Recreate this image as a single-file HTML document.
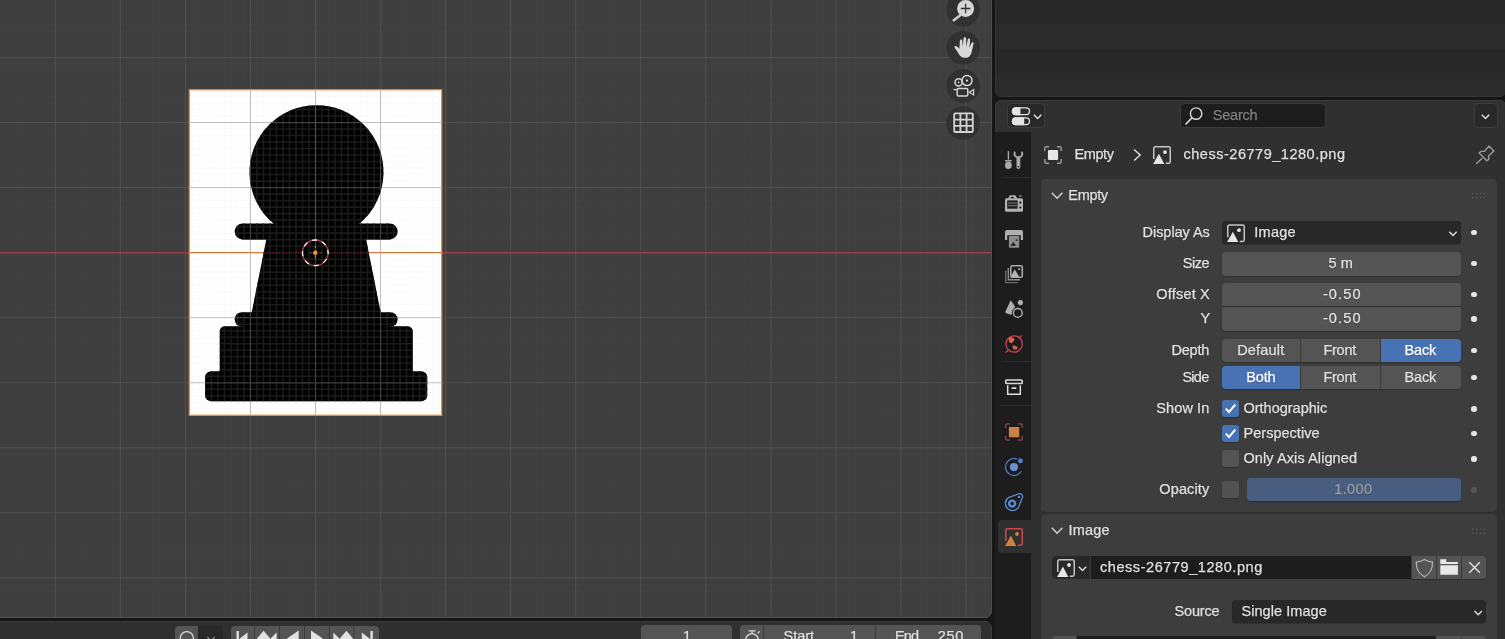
<!DOCTYPE html>
<html><head><meta charset="utf-8"><title>Blender</title>
<style>
html,body{margin:0;padding:0;}
body{width:1505px;height:639px;overflow:hidden;background:#161616;position:relative;font-family:"Liberation Sans",sans-serif;}
.a{position:absolute;box-sizing:border-box;}
.vp{position:absolute;left:0;top:0;display:block;}
.t{position:absolute;height:20px;line-height:20px;white-space:pre;text-shadow:0 1px 1px rgba(0,0,0,0.35);-webkit-text-stroke:0.25px currentColor;}
svg{overflow:visible}
.num{background:#545454;border-radius:3.5px;box-shadow:0 1px 1px rgba(0,0,0,0.22);}
.menu{background:#282828;border-radius:3.5px;box-shadow:0 1px 1px rgba(0,0,0,0.22);}
.dot{width:5.4px;height:5.4px;border-radius:50%;background:#e6e6e6;left:1471.3px;}
.cb{left:1222px;width:17px;height:17px;border-radius:3px;background:#545454;box-shadow:0 1px 1px rgba(0,0,0,0.22);}
.cb.on{background:#4772b3;}
.panel{background:#3d3d3d;border-radius:5px;left:1041px;width:456px;}
</style></head><body>
<div class="a" style="left:0;top:0;width:991.500px;height:617.700px;border-radius:0 0 7px 0;overflow:hidden;"><svg class="vp" width="992" height="618" viewBox="0 0 992 618">
<defs>
<path id="gmn" d="M3.26 0V618M9.76 0V618M16.27 0V618M22.77 0V618M29.28 0V618M35.79 0V618M42.29 0V618M48.80 0V618M61.81 0V618M68.31 0V618M74.81 0V618M81.32 0V618M87.83 0V618M94.33 0V618M100.84 0V618M107.34 0V618M113.84 0V618M126.85 0V618M133.36 0V618M139.87 0V618M146.37 0V618M152.88 0V618M159.38 0V618M165.88 0V618M172.39 0V618M178.90 0V618M191.91 0V618M198.41 0V618M204.92 0V618M211.42 0V618M217.93 0V618M224.43 0V618M230.94 0V618M237.44 0V618M243.94 0V618M256.95 0V618M263.46 0V618M269.97 0V618M276.47 0V618M282.98 0V618M289.48 0V618M295.99 0V618M302.49 0V618M309.00 0V618M322.00 0V618M328.51 0V618M335.01 0V618M341.52 0V618M348.02 0V618M354.53 0V618M361.03 0V618M367.54 0V618M374.05 0V618M387.06 0V618M393.56 0V618M400.06 0V618M406.57 0V618M413.07 0V618M419.58 0V618M426.08 0V618M432.59 0V618M439.10 0V618M452.11 0V618M458.61 0V618M465.12 0V618M471.62 0V618M478.12 0V618M484.63 0V618M491.13 0V618M497.64 0V618M504.14 0V618M517.15 0V618M523.66 0V618M530.16 0V618M536.67 0V618M543.17 0V618M549.68 0V618M556.18 0V618M562.69 0V618M569.19 0V618M582.20 0V618M588.71 0V618M595.21 0V618M601.72 0V618M608.23 0V618M614.73 0V618M621.24 0V618M627.74 0V618M634.25 0V618M647.25 0V618M653.76 0V618M660.26 0V618M666.77 0V618M673.27 0V618M679.78 0V618M686.28 0V618M692.79 0V618M699.30 0V618M712.31 0V618M718.81 0V618M725.32 0V618M731.82 0V618M738.33 0V618M744.83 0V618M751.34 0V618M757.84 0V618M764.35 0V618M777.36 0V618M783.86 0V618M790.37 0V618M796.87 0V618M803.38 0V618M809.88 0V618M816.38 0V618M822.89 0V618M829.39 0V618M842.40 0V618M848.91 0V618M855.41 0V618M861.92 0V618M868.42 0V618M874.93 0V618M881.43 0V618M887.94 0V618M894.44 0V618M907.46 0V618M913.96 0V618M920.47 0V618M926.97 0V618M933.48 0V618M939.98 0V618M946.49 0V618M952.99 0V618M959.50 0V618M972.50 0V618M979.01 0V618M985.51 0V618M0 5.46H992M0 11.97H992M0 18.47H992M0 24.98H992M0 31.48H992M0 37.99H992M0 44.49H992M0 51.00H992M0 64.00H992M0 70.51H992M0 77.02H992M0 83.52H992M0 90.03H992M0 96.53H992M0 103.03H992M0 109.54H992M0 116.05H992M0 129.06H992M0 135.56H992M0 142.06H992M0 148.57H992M0 155.07H992M0 161.58H992M0 168.09H992M0 174.59H992M0 181.10H992M0 194.11H992M0 200.61H992M0 207.12H992M0 213.62H992M0 220.12H992M0 226.63H992M0 233.13H992M0 239.64H992M0 246.15H992M0 259.16H992M0 265.66H992M0 272.17H992M0 278.67H992M0 285.18H992M0 291.68H992M0 298.19H992M0 304.69H992M0 311.19H992M0 324.20H992M0 330.71H992M0 337.22H992M0 343.72H992M0 350.23H992M0 356.73H992M0 363.24H992M0 369.74H992M0 376.25H992M0 389.25H992M0 395.76H992M0 402.26H992M0 408.77H992M0 415.27H992M0 421.78H992M0 428.28H992M0 434.79H992M0 441.30H992M0 454.31H992M0 460.81H992M0 467.31H992M0 473.82H992M0 480.32H992M0 486.83H992M0 493.34H992M0 499.84H992M0 506.35H992M0 519.36H992M0 525.86H992M0 532.37H992M0 538.87H992M0 545.38H992M0 551.88H992M0 558.38H992M0 564.89H992M0 571.39H992M0 584.40H992M0 590.91H992M0 597.41H992M0 603.92H992M0 610.42H992M0 616.93H992"/>
<path id="gmj" d="M55.30 0V618M120.35 0V618M185.40 0V618M250.45 0V618M315.50 0V618M380.55 0V618M445.60 0V618M510.65 0V618M575.70 0V618M640.75 0V618M705.80 0V618M770.85 0V618M835.90 0V618M900.95 0V618M966.00 0V618M0 57.50H992M0 122.55H992M0 187.60H992M0 317.70H992M0 382.75H992M0 447.80H992M0 512.85H992M0 577.90H992"/>
<clipPath id="cimg"><rect x="189.45" y="90" width="252.1" height="325.2"/></clipPath>
<g id="pawnshape">
<circle cx="316.5" cy="172.2" r="67"/>
<rect x="234.7" y="223.6" width="162.9" height="15.8" rx="7.9"/>
<path d="M268 231L364.4 231L382 319L250.4 319Z"/>
<rect x="234.7" y="312.2" width="162.9" height="14.4" rx="7.2"/>
<rect x="242" y="318" width="148.300" height="12"/>
<rect x="219.7" y="326.3" width="193" height="52" rx="5"/>
<rect x="205.1" y="371.3" width="222.2" height="30" rx="6"/>
</g>
<clipPath id="cpawn">
<circle cx="316.5" cy="172.2" r="67"/>
<rect x="234.7" y="223.6" width="162.9" height="15.8" rx="7.9"/>
<path d="M268 231L364.4 231L382 319L250.4 319Z"/>
<rect x="234.7" y="312.2" width="162.9" height="14.4" rx="7.2"/>
<rect x="242" y="318" width="148.300" height="12"/>
<rect x="219.7" y="326.3" width="193" height="52" rx="5"/>
<rect x="205.1" y="371.3" width="222.2" height="30" rx="6"/>
</clipPath>
</defs>
<rect x="0" y="0" width="992" height="618" fill="#3f3f3f"/>
<g fill="none" stroke-width="1">
<use href="#gmn" stroke="#424242"/>
<use href="#gmj" stroke="#525252"/>
</g>
<!-- x axis -->
<path d="M0 252.750H992" stroke="#9a3c4b" stroke-width="1.600" fill="none"/>
<!-- image -->
<rect x="189.45" y="90" width="252.1" height="325.2" fill="#ffffff"/>
<g fill="none" stroke-width="1" clip-path="url(#cimg)">
<use href="#gmn" stroke="#f9f9f9"/>
<use href="#gmj" stroke="#bdbdbd"/>
<path d="M189 252.700H442" stroke="#cf7a3c" stroke-width="1.200"/>
</g>
<use href="#pawnshape" fill="#000000"/>
<g fill="none" stroke-width="1" clip-path="url(#cpawn)">
<use href="#gmn" stroke="#1b1b1b" stroke-width="1.550"/>
<use href="#gmj" stroke="#404040" stroke-width="1.250"/>
<path d="M315.500 104V240" stroke="#4e4e4e" stroke-width="1"/>
<path d="M250 252.800H302M329 252.800H382" stroke="#8a3443" stroke-width="1.2" stroke-dasharray="1.2 1.2"/>
</g>
<!-- selection outline -->
<rect x="189.3" y="89.700" width="252.400" height="325.600" fill="none" stroke="#f08a2c" stroke-width="1.300"/>
<!-- 3d cursor -->
<g fill="none" stroke-width="1.3">
<circle cx="315.3" cy="252.8" r="12.8" stroke="#a63a4b"/>
<circle cx="315.3" cy="252.8" r="12.8" stroke="#f0f0f0" stroke-dasharray="5.027 5.027" stroke-dashoffset="3.6"/>
<path d="M309.300 252.800H312.400M319.400 252.800H321.800" stroke="#a63a4b" stroke-width="1"/>
<path d="M315.400 246.300V248M315.400 255.400V258.200" stroke="#9a9a9a" stroke-width="1"/>
</g>
<circle cx="315.300" cy="252.800" r="2.300" fill="#f09a2a"/>
<!-- nav gizmo buttons -->
<g fill="#303030" fill-opacity="0.9">
<circle cx="963.1" cy="9.9" r="16.9"/>
<circle cx="963.1" cy="47.9" r="16.9"/>
<circle cx="963.1" cy="85.9" r="16.9"/>
<circle cx="963.1" cy="123" r="16.9"/>
</g>
<!-- zoom icon -->
<path d="M960 15.400L953.800 20.300" stroke="#cdcdcd" stroke-width="2.600" stroke-linecap="round" fill="none"/>
<circle cx="965.600" cy="8.500" r="8.500" fill="#d6d6d6"/>
<path d="M960.800 8.500H970.400M965.600 3.700V13.300" stroke="#333333" stroke-width="1.300" fill="none"/>
<!-- hand icon -->
<g fill="#d8d8d8" transform="translate(1.2 0)">
<path d="M955.5 50.5c-1.2-1.6-2.8-3.2-2-4.2 1-1.1 3 .4 4.6 2.6l.6-8.2c.1-1.6 2.3-1.6 2.4 0l.5 6.2.7-8.4c.2-1.6 2.5-1.6 2.6 0l.2 8.4 1.4-7.4c.3-1.5 2.5-1.2 2.4.4l-.7 8 2-5c.6-1.4 2.5-.7 2.2.7l-1.800 7.800c-.8 3.600-2.300 6.400-6.700 6.400-4.500 0-6.200-3.200-8.400-7.300z"/>
</g>
<!-- camera icon -->
<g fill="none" stroke="#d4d4d4" stroke-width="1.5">
<circle cx="958.6" cy="82.3" r="3.6"/>
<circle cx="967" cy="80.6" r="5"/>
<rect x="957.2" y="88.6" width="10.6" height="7.4" rx="1.2"/>
<path d="M969.4 92.3L973.6 89.6V95Z" stroke-width="1.2"/>
<path d="M953.6 89.6H956.6" stroke-width="1.4"/>
</g>
<circle cx="958.6" cy="82.3" r="0.9" fill="#e4e4e4"/><circle cx="967" cy="80.6" r="1.1" fill="#e4e4e4"/>
<!-- grid icon -->
<g fill="none" stroke="#d4d4d4" stroke-width="1.8">
<rect x="954.2" y="113.400" width="18.6" height="18.6" rx="1"/>
<path d="M960.4 113.400V132M966.600 113.400V132M954.2 119.600H972.800M954.200 125.800H972.800"/>
</g>
</svg>
</div>
<div class="a" style="left:-2px;top:-2px;width:993.500px;height:619.700px;border-radius:0 0 7px 0;border:1.200px solid #4e4e4e;"></div>

<!-- timeline header -->
<div class="a" style="left:-2px;top:621.200px;width:993.700px;height:24px;background:#303030;border-radius:0 7px 0 0;border:1px solid #3d3d3d;"></div>
<div class="a" style="left:175px;top:625.5px;width:23.3px;height:20px;background:#545454;border-radius:4px 0 0 0;"></div>
<div class="a" style="left:198.3px;top:625.5px;width:24.7px;height:20px;background:#282828;border-radius:0 4px 0 0;"></div>
<div class="a" style="left:231.3px;top:625.5px;width:147.7px;height:20px;background:#545454;border-radius:4px 4px 0 0;"></div>
<div class="a" style="left:640.7px;top:625.3px;width:91.7px;height:20px;background:#545454;border-radius:4px 4px 0 0;"></div>
<div class="a" style="left:740px;top:625.3px;width:241px;height:20px;background:#545454;border-radius:4px 4px 0 0;"></div>
<svg class="a" style="left:0;top:621px" width="992" height="18" viewBox="0 621 992 18">
<g stroke="#3a3a3a" stroke-width="1" fill="none"><path d="M254.6 625.5V639M279.6 625.5V639M304.6 625.5V639M329.4 625.5V639M354 625.5V639M763.700 625.3V639M875.400 625.3V639"/></g>
<circle cx="186.8" cy="638.2" r="6.6" fill="none" stroke="#dcdcdc" stroke-width="1.3"/>
<path d="M207.200 636.800L211 640.600L214.800 636.800" fill="none" stroke="#8a8a8a" stroke-width="1.2"/>
<g fill="#e2e2e2">
<rect x="236.500" y="631" width="2.400" height="10"/><path d="M247.500 632.500V645L239.500 638.800Z"/>
<path d="M263.600 630.800L270.200 638.500L263.600 646L257 638.500Z"/><path d="M276.700 632.500V645L270.300 638.800Z"/>
<path d="M298.700 630.400V646.600L287 638.500Z"/>
<path d="M311 630.400V646.600L322.700 638.500Z"/>
<path d="M333.300 632.500V645L339.700 638.800Z"/><path d="M346.400 630.800L353 638.500L346.400 646L339.800 638.500Z"/>
<path d="M361.800 632.500V645L369.800 638.800Z"/><rect x="370.400" y="631" width="2.400" height="10"/>
</g>
<g fill="none" stroke="#dcdcdc" stroke-width="1.3"><circle cx="752" cy="640" r="6.300"/><path d="M748.500 630.800H755.500M752 631V634M757.800 633.200L759.600 631.400"/></g>
</svg>

<!-- outliner -->
<div class="a" style="left:995px;top:-4px;width:510.500px;height:101px;background:#282828;border-radius:6px;border:1px solid #353535;overflow:hidden;">
<div class="a" style="left:0;top:27px;width:512px;height:25px;background:#2b2b2b;"></div>
<div class="a" style="left:0;top:77px;width:512px;height:25px;background:#2b2b2b;"></div>
</div>

<!-- properties editor -->
<div class="a" style="left:995px;top:100px;width:510.500px;height:545px;background:#303030;border-radius:6px;border:1px solid #3a3a3a;"></div>
<div class="a" style="left:995px;top:131.700px;width:36px;height:510px;background:#1d1d1d;"></div>
<div class="a" style="left:998px;top:520px;width:33px;height:33px;background:#303030;border-radius:4px 0 0 4px;"></div>
<div class="a" style="left:1001px;top:177px;width:30px;height:1px;background:#2c2c2c;"></div>
<div class="a" style="left:1001px;top:361px;width:30px;height:1px;background:#2c2c2c;"></div>
<div class="a" style="left:1001px;top:404.500px;width:30px;height:1px;background:#2c2c2c;"></div>

<!-- header widgets -->
<div class="a" style="left:1006.500px;top:103.200px;width:38.800px;height:24.700px;background:#282828;border:1px solid #3d3d3d;border-radius:4.500px;"></div>
<div class="a" style="left:1179.800px;top:103.200px;width:146.500px;height:24.600px;background:#1d1d1d;border:1px solid #3a3a3a;border-radius:4.500px;"></div>
<div class="a" style="left:1473.500px;top:103.200px;width:24px;height:24.600px;background:#282828;border:1px solid #3d3d3d;border-radius:4.500px;"></div>

<!-- panels -->
<div class="a panel" style="top:179px;height:332.500px;"></div>
<div class="a panel" style="top:514px;height:140px;"></div>

<!-- Empty panel widgets -->
<div class="a menu" style="left:1222px;top:221px;width:239px;height:23px;"></div>
<div class="a num" style="left:1222px;top:252px;width:239px;height:23.500px;"></div>
<div class="a num" style="left:1222px;top:283px;width:239px;height:23.300px;border-radius:4px 4px 0 0;"></div>
<div class="a num" style="left:1222px;top:307.300px;width:239px;height:23.700px;border-radius:0 0 4px 4px;"></div>
<!-- depth -->
<div class="a num" style="left:1222px;top:339px;width:78px;height:23px;border-radius:4px 0 0 4px;"></div>
<div class="a num" style="left:1301px;top:339px;width:79.200px;height:23px;border-radius:0;"></div>
<div class="a num" style="left:1381.200px;top:339px;width:79.800px;height:23px;border-radius:0 4px 4px 0;background:#4772b3;"></div>
<!-- side -->
<div class="a num" style="left:1222px;top:366px;width:78px;height:23px;border-radius:4px 0 0 4px;background:#4772b3;"></div>
<div class="a num" style="left:1301px;top:366px;width:79.200px;height:23px;border-radius:0;"></div>
<div class="a num" style="left:1381.200px;top:366px;width:79.800px;height:23px;border-radius:0 4px 4px 0;"></div>
<!-- checkboxes -->
<div class="a cb on" style="top:400px;"></div>
<div class="a cb on" style="top:425px;"></div>
<div class="a cb" style="top:450px;"></div>
<div class="a cb" style="top:481.200px;background:#525252;"></div>
<svg class="a" style="left:1222px;top:400px" width="17" height="17" viewBox="0 0 17 17"><path d="M3.800 8.600L7 12L13.300 4.600" fill="none" stroke="#ffffff" stroke-width="2"/></svg>
<svg class="a" style="left:1222px;top:425px" width="17" height="17" viewBox="0 0 17 17"><path d="M3.800 8.600L7 12L13.300 4.600" fill="none" stroke="#ffffff" stroke-width="2"/></svg>
<!-- opacity slider -->
<div class="a" style="left:1247px;top:478px;width:214.300px;height:23px;border-radius:3.500px;background:#495d81;box-shadow:0 1px 1px rgba(0,0,0,0.22);"></div>
<!-- dots -->
<div class="a dot" style="top:229.600px"></div>
<div class="a dot" style="top:260.600px"></div>
<div class="a dot" style="top:291.600px"></div>
<div class="a dot" style="top:316.400px"></div>
<div class="a dot" style="top:348.100px"></div>
<div class="a dot" style="top:374.800px"></div>
<div class="a dot" style="top:406.300px"></div>
<div class="a dot" style="top:430.900px"></div>
<div class="a dot" style="top:456.300px"></div>
<div class="a dot" style="top:487.300px;background:#575757"></div>

<!-- Image panel widgets -->
<div class="a" style="left:1052px;top:556px;width:38.300px;height:23px;background:#282828;border-radius:4px 0 0 4px;"></div>
<div class="a" style="left:1091px;top:556px;width:320px;height:23px;background:#1d1d1d;"></div>
<div class="a num" style="left:1412px;top:556px;width:24.300px;height:23px;border-radius:0;"></div>
<div class="a num" style="left:1437.200px;top:556px;width:23.800px;height:23px;border-radius:0;"></div>
<div class="a num" style="left:1461.800px;top:556px;width:24.300px;height:23px;border-radius:0 4px 4px 0;"></div>
<div class="a menu" style="left:1232px;top:600.300px;width:254px;height:22.700px;"></div>
<div class="a num" style="left:1052px;top:636.300px;width:24.300px;height:10px;border-radius:4px 0 0 0;"></div>
<div class="a" style="left:1077px;top:636.300px;width:358.600px;height:10px;background:#1d1d1d;"></div>
<div class="a num" style="left:1436.400px;top:636.300px;width:24.300px;height:10px;border-radius:0;"></div>
<div class="a num" style="left:1461.800px;top:636.300px;width:24.300px;height:10px;border-radius:0 4px 0 0;"></div>

<svg class="a" style="left:0;top:0" width="1505" height="639" viewBox="0 0 1505 639">
<defs>
<g id="imgico">
<path d="M0.750 13V2.400a1.650 1.650 0 0 1 1.650-1.650H15.600a1.650 1.650 0 0 1 1.650 1.650V15.600a1.650 1.650 0 0 1-1.650 1.650H12.800" fill="none" stroke-width="1.500"/>
<path d="M0.100 17.900L5.900 7.600L11.300 17.900Z" stroke="none"/>
<circle cx="12" cy="6" r="1.900" stroke="none"/>
</g>
<path id="chev" d="M-3.700 -1.900L0 1.900L3.700 -1.900" fill="none" stroke-width="1.400"/>
</defs>

<!-- editor type icon -->
<g>
<rect x="1012.700" y="107.800" width="16.800" height="6.800" rx="3.400" fill="#2b2b2b" stroke="#e0e0e0" stroke-width="1.300"/>
<path d="M1015.800 107.200H1020.400V115.200H1015.800a4 4 0 0 1 0-8Z" fill="#e4e4e4"/>
<rect x="1012.700" y="117.800" width="16.800" height="6.800" rx="3.400" fill="#2b2b2b" stroke="#e0e0e0" stroke-width="1.300"/>
<path d="M1015.800 117.200H1024.200V125.200H1015.800a4 4 0 0 1 0-8Z" fill="#e4e4e4"/>
<use href="#chev" x="1037.600" y="116.600" stroke="#e0e0e0"/>
</g>
<!-- search icon -->
<g fill="none" stroke="#d8d8d8" stroke-width="1.400"><circle cx="1196.100" cy="113.600" r="5.700"/><path d="M1192 117.800L1185.600 124.400" stroke-width="1.600"/></g>
<!-- header right chevron -->
<use href="#chev" x="1485.500" y="116.600" stroke="#e0e0e0"/>

<!-- breadcrumb icons -->
<rect x="1047.900" y="149.900" width="10.200" height="10.200" rx="1" fill="#e6e6e6"/>
<g fill="none" stroke="#9a9a9a" stroke-width="1.400"><path d="M1044.800 151V148.300a1.500 1.500 0 0 1 1.500-1.500H1049M1057 146.800H1059.700a1.500 1.500 0 0 1 1.500 1.500V151M1061.200 159V161.700a1.500 1.500 0 0 1-1.500 1.500H1057M1049 163.200H1046.300a1.500 1.500 0 0 1-1.500-1.500V159"/></g>
<path d="M1134.100 149.500L1140.200 155L1134.100 160.500" fill="none" stroke="#e0e0e0" stroke-width="1.400"/>
<use href="#imgico" x="1153" y="146.100" fill="#e6e6e6" stroke="#c6c6c6"/>
<!-- pin -->
<g fill="none" stroke="#9c9c9c" stroke-width="1.400" stroke-linejoin="round" stroke-linecap="round"><path d="M1476.500 163.500L1481.900 158.500"/><path d="M1479.200 153.100L1486.900 160.800L1488.800 159.300L1488.500 155.900L1493.900 151.100L1488.900 146.100L1484.400 151.300L1480.900 151.400Z"/></g>

<!-- panel chevrons & grips -->
<path d="M1051.800 192.800L1057.100 198.300L1062.400 192.800" fill="none" stroke="#d4d4d4" stroke-width="1.400"/>
<path d="M1051.800 527.800L1057.100 533.300L1062.400 527.800" fill="none" stroke="#d4d4d4" stroke-width="1.400"/>
<g fill="#5c5c5c">
<rect x="1472" y="192.900" width="1.400" height="1.400"/><rect x="1475.900" y="192.900" width="1.400" height="1.400"/><rect x="1479.800" y="192.900" width="1.400" height="1.400"/><rect x="1483.700" y="192.900" width="1.400" height="1.400"/>
<rect x="1472" y="196.800" width="1.400" height="1.400"/><rect x="1475.900" y="196.800" width="1.400" height="1.400"/><rect x="1479.800" y="196.800" width="1.400" height="1.400"/><rect x="1483.700" y="196.800" width="1.400" height="1.400"/>
<rect x="1472" y="528.600" width="1.400" height="1.400"/><rect x="1475.900" y="528.600" width="1.400" height="1.400"/><rect x="1479.800" y="528.600" width="1.400" height="1.400"/><rect x="1483.700" y="528.600" width="1.400" height="1.400"/>
<rect x="1472" y="532.500" width="1.400" height="1.400"/><rect x="1475.900" y="532.500" width="1.400" height="1.400"/><rect x="1479.800" y="532.500" width="1.400" height="1.400"/><rect x="1483.700" y="532.500" width="1.400" height="1.400"/>
</g>

<!-- Display As dropdown -->
<use href="#imgico" x="1227" y="224.200" fill="#e6e6e6" stroke="#c6c6c6"/>
<use href="#chev" x="1453" y="233.600" stroke="#e0e0e0"/>

<!-- ID widget -->
<use href="#imgico" x="1057" y="559" fill="#e6e6e6" stroke="#c6c6c6"/>
<use href="#chev" x="1082.500" y="568.600" stroke="#e0e0e0"/>
<path d="M1424.400 559.600C1421.500 561.600 1419 562 1416.300 562.100C1416 569 1418.500 573.500 1424.400 576.800C1430.300 573.500 1432.800 569 1432.500 562.100C1429.800 562 1427.300 561.600 1424.400 559.600Z" fill="none" stroke="#b4b4b4" stroke-width="1.200"/>
<path d="M1440.300 559.300H1446.300V562H1457.900V564.100H1440.300ZM1440.300 565.300H1457.900V574.800H1440.300Z" fill="#e8e8e8"/>
<path d="M1469.300 562.300L1479.800 572.700M1479.800 562.300L1469.300 572.700" stroke="#e6e6e6" stroke-width="1.300" fill="none"/>
<!-- Source dropdown chevron -->
<use href="#chev" x="1478.200" y="612.800" stroke="#e0e0e0"/>

<!-- NAV TAB ICONS -->
<!-- tool -->
<g fill="#a8a8a8">
<rect x="1007.700" y="151.200" width="1.400" height="8.400"/><rect x="1005" y="160" width="6.800" height="1.500" rx="0.300"/><ellipse cx="1008.400" cy="165.300" rx="3.400" ry="3.800"/>
<path d="M1014.300 151.300a4.500 4.500 0 0 0 2.200 6.700V167a1.900 1.900 0 0 0 3.800 0V158a4.500 4.500 0 0 0 2.200-6.700l-1.300 0.600V155.200l-1.500 1.100h-2.600l-1.500-1.100V151.900Z"/>
</g>
<circle cx="1018.400" cy="166.700" r="0.700" fill="#1d1d1d"/>
<!-- render -->
<g fill="#b2b2b2">
<rect x="1005" y="198.300" width="18" height="13.500" rx="1.500"/>
<path d="M1008 198.500L1009.900 195.300H1015.400L1017.300 198.500Z"/>
<rect x="1019.200" y="195.400" width="2.200" height="1.200"/>
</g>
<rect x="1007.200" y="200.400" width="10.400" height="8.300" fill="#1d1d1d"/>
<path d="M1008 203H1016.800M1008 205.700H1016.800" stroke="#8a8a8a" stroke-width="0.900"/>
<g fill="#1d1d1d"><ellipse cx="1012.200" cy="197.600" rx="1.700" ry="0.800"/><circle cx="1020.300" cy="202.700" r="1.100"/><circle cx="1020.300" cy="207.600" r="1.100"/></g>
<!-- output -->
<path d="M1007 230H1021a2 2 0 0 1 2 2V239.900H1020.800V235.200H1007.200V239.900H1005V232a2 2 0 0 1 2-2Z" fill="#b0b0b0"/>
<rect x="1008.900" y="236.100" width="10.300" height="11.700" rx="0.800" fill="#8c8c8c"/>
<path d="M1010.400 245.700L1013.300 242L1016.200 245.700Z" fill="#1d1d1d"/><circle cx="1016.500" cy="240.200" r="0.900" fill="#1d1d1d"/>
<!-- view layer -->
<g fill="none">
<path d="M1005.700 270.500V282.600H1017.600" stroke="#6a6a6a" stroke-width="1.400"/>
<path d="M1008.300 268V279.800H1020" stroke="#8c8c8c" stroke-width="1.400"/>
<rect x="1010.800" y="265.800" width="11.500" height="11.500" rx="1.500" stroke="#a8a8a8" stroke-width="1.600" fill="#1d1d1d"/>
</g>
<path d="M1010.600 277.300L1014.600 269.300L1019.600 277.300Z" fill="#b4b4b4"/><rect x="1018.300" y="268.200" width="1.800" height="1.800" fill="#b4b4b4"/>
<!-- scene -->
<path d="M1010.700 300.200L1005.200 312L1005.800 313L1011.400 315L1012.300 310.500L1015.200 306.800Z" fill="#b0b0b0"/>
<circle cx="1017.800" cy="312.900" r="4.400" fill="#1d1d1d" stroke="#b0b0b0" stroke-width="1.400"/>
<circle cx="1020.400" cy="302.600" r="2.600" fill="#b0b0b0"/>
<!-- world -->
<g fill="none" stroke="#c84453" stroke-width="1.300"><circle cx="1014.100" cy="344" r="8.200"/><path d="M1019.600 337.700L1021.800 335.400M1008.400 350.300L1005.600 352.600"/></g>
<path d="M1008.500 338.500L1011 336.800L1014.800 339.200L1013.400 341.600L1011.400 343.500L1009 341.800Z" fill="#dc6448"/>
<path d="M1012.200 345.300L1015.800 346L1017.900 347.500L1016.400 349.600L1013.400 349.600Z" fill="#dc6448"/>
<!-- collection -->
<g fill="none" stroke="#dcdcdc" stroke-width="1.500"><rect x="1005.750" y="379.900" width="16.500" height="3.600" rx="0.800"/><path d="M1007.700 385.200V394.200H1020.300V385.200"/></g>
<rect x="1011.500" y="387.200" width="5" height="1.700" rx="0.700" fill="#dcdcdc"/>
<!-- object -->
<rect x="1008.900" y="426.900" width="10.300" height="10.300" rx="0.600" fill="#c98348"/>
<g fill="none" stroke="#8c4a56" stroke-width="1.300"><path d="M1005.700 428V425.300a1.500 1.500 0 0 1 1.500-1.500H1010M1018 423.800H1020.700a1.500 1.500 0 0 1 1.500 1.500V428M1022.200 436V438.700a1.500 1.500 0 0 1-1.500 1.500H1018M1010 440.200H1007.200a1.500 1.500 0 0 1-1.500-1.500V436"/></g>
<!-- physics -->
<circle cx="1014" cy="467" r="4.100" fill="#6a8fd2"/>
<path d="M1017.200 459.100A8.500 8.500 0 1 0 1021.400 471.200" fill="none" stroke="#4f78bd" stroke-width="1.300"/>
<circle cx="1020.400" cy="460.700" r="2.500" fill="#4f7cc4"/>
<!-- constraints -->
<g fill="none" stroke="#5b8ad8">
<path d="M1019.300 493.600C1021.600 493.300 1023 495.200 1022.400 497.300L1018.900 506.400A7.100 7.100 0 1 1 1008.400 497.600Z" stroke-width="1.300"/>
<circle cx="1012.100" cy="503.600" r="3" stroke-width="2.400"/>
</g>
<rect x="1018" y="496" width="2" height="2" fill="#5b8ad8"/>
<!-- data (image) -->
<use href="#imgico" x="1005" y="528" fill="#cf8240" stroke="#c84a4c"/>
</svg>

<div class="a" id="txt" style="left:0;top:0;width:1505px;height:639px;will-change:transform;">
<div class="t" style="left:1212.80px;top:104.88px;font-size:14.5px;letter-spacing:-0.211px;color:#808080;">Search</div>
<div class="t" style="left:1074.50px;top:144.48px;font-size:14.5px;letter-spacing:-0.398px;color:#e0e0e0;">Empty</div>
<div class="t" style="left:1183.50px;top:144.48px;font-size:14.5px;letter-spacing:0.522px;color:#e0e0e0;">chess-26779_1280.png</div>
<div class="t" style="left:1068.30px;top:184.78px;font-size:14.5px;letter-spacing:-0.323px;color:#e0e0e0;">Empty</div>
<div class="t" style="left:1142.60px;top:221.98px;font-size:14.5px;letter-spacing:-0.056px;color:#e0e0e0;">Display As</div>
<div class="t" style="left:1254.30px;top:221.98px;font-size:14.5px;letter-spacing:0.272px;color:#e0e0e0;">Image</div>
<div class="t" style="left:1182.70px;top:252.68px;font-size:14.5px;letter-spacing:-0.473px;color:#e0e0e0;">Size</div>
<div class="t" style="left:1328.50px;top:252.68px;font-size:14.5px;letter-spacing:0.064px;color:#e0e0e0;">5 m</div>
<div class="t" style="left:1156.30px;top:283.68px;font-size:14.5px;letter-spacing:0.196px;color:#e0e0e0;">Offset X</div>
<div class="t" style="left:1322.90px;top:283.68px;font-size:14.5px;letter-spacing:1.134px;color:#e0e0e0;">-0.50</div>
<div class="t" style="left:1200.50px;top:308.28px;font-size:14.5px;letter-spacing:0.000px;color:#e0e0e0;">Y</div>
<div class="t" style="left:1322.90px;top:308.28px;font-size:14.5px;letter-spacing:1.134px;color:#e0e0e0;">-0.50</div>
<div class="t" style="left:1171.40px;top:340.18px;font-size:14.5px;letter-spacing:-0.201px;color:#e0e0e0;">Depth</div>
<div class="t" style="left:1237.20px;top:340.18px;font-size:14.5px;letter-spacing:0.191px;color:#e0e0e0;">Default</div>
<div class="t" style="left:1323.40px;top:340.18px;font-size:14.5px;letter-spacing:-0.236px;color:#e0e0e0;">Front</div>
<div class="t" style="left:1404.50px;top:340.18px;font-size:14.5px;letter-spacing:-0.150px;color:#ffffff;">Back</div>
<div class="t" style="left:1182.40px;top:366.68px;font-size:14.5px;letter-spacing:-0.710px;color:#e0e0e0;">Side</div>
<div class="t" style="left:1246.20px;top:366.68px;font-size:14.5px;letter-spacing:-0.148px;color:#ffffff;">Both</div>
<div class="t" style="left:1323.40px;top:366.68px;font-size:14.5px;letter-spacing:-0.236px;color:#e0e0e0;">Front</div>
<div class="t" style="left:1404.50px;top:366.68px;font-size:14.5px;letter-spacing:-0.150px;color:#e0e0e0;">Back</div>
<div class="t" style="left:1156.30px;top:398.08px;font-size:14.5px;letter-spacing:0.099px;color:#e0e0e0;">Show In</div>
<div class="t" style="left:1243.50px;top:398.08px;font-size:14.5px;letter-spacing:-0.012px;color:#e0e0e0;">Orthographic</div>
<div class="t" style="left:1243.50px;top:422.98px;font-size:14.5px;letter-spacing:0.023px;color:#e0e0e0;">Perspective</div>
<div class="t" style="left:1243.50px;top:447.88px;font-size:14.5px;letter-spacing:0.091px;color:#e0e0e0;">Only Axis Aligned</div>
<div class="t" style="left:1159.30px;top:478.78px;font-size:14.5px;letter-spacing:0.138px;color:#e0e0e0;">Opacity</div>
<div class="t" style="left:1334.20px;top:478.78px;font-size:14.5px;letter-spacing:0.401px;color:#9a9fa8;">1.000</div>
<div class="t" style="left:1068.60px;top:519.98px;font-size:14.5px;letter-spacing:0.147px;color:#e0e0e0;">Image</div>
<div class="t" style="left:1100.00px;top:557.08px;font-size:14.5px;letter-spacing:0.559px;color:#e0e0e0;">chess-26779_1280.png</div>
<div class="t" style="left:1174.50px;top:600.98px;font-size:14.5px;letter-spacing:-0.171px;color:#e0e0e0;">Source</div>
<div class="t" style="left:1241.50px;top:600.98px;font-size:14.5px;letter-spacing:0.051px;color:#e0e0e0;">Single Image</div>
<div class="t" style="left:683.00px;top:626.48px;font-size:14.5px;letter-spacing:0.000px;color:#e0e0e0;">1</div>
<div class="t" style="left:783.60px;top:626.48px;font-size:14.5px;letter-spacing:-0.056px;color:#e0e0e0;">Start</div>
<div class="t" style="left:850.00px;top:626.48px;font-size:14.5px;letter-spacing:0.000px;color:#e0e0e0;">1</div>
<div class="t" style="left:895.00px;top:626.48px;font-size:14.5px;letter-spacing:-0.906px;color:#e0e0e0;">End</div>
<div class="t" style="left:937.70px;top:626.48px;font-size:14.5px;letter-spacing:0.748px;color:#e0e0e0;">250</div>
</div>
</body></html>
